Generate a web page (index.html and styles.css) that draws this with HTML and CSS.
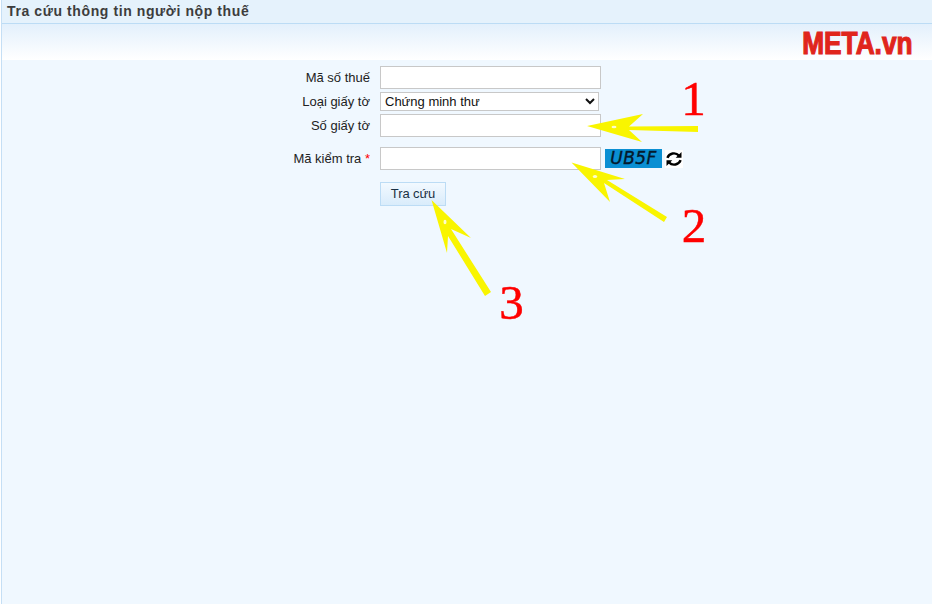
FILE: index.html
```html
<!DOCTYPE html>
<html lang="vi">
<head>
<meta charset="utf-8">
<title>Tra cứu thông tin người nộp thuế</title>
<link rel="stylesheet" href="styles.css">
</head>
<body>
<div class="page">
  <header class="title-bar"><h1 class="title">Tra cứu thông tin người nộp thuế</h1></header>
  <div class="band"><span class="logo">META.vn</span></div>
  <form class="form">
    <label class="label">Mã số thuế</label>
    <input class="field field-tall" type="text">
    <label class="label">Loại giấy tờ</label>
    <select class="select"><option>Chứng minh thư</option></select>
    <label class="label">Số giấy tờ</label>
    <input class="field field-tall" type="text">
    <label class="label label-gap">Mã kiểm tra <span class="req">*</span></label>
    <div class="captcha-row label-gap">
      <input class="field field-tall" type="text">
      <span class="captcha">UB5F</span>
      <span class="refresh">
        <svg width="18" height="18" viewBox="0 0 18 18" fill="none" stroke="#000" stroke-width="2.4">
          <path d="M2.400 7.800A6.800 6.400 0 0 1 14 5.600"/>
          <path d="M15.600 10.200A6.800 6.400 0 0 1 4 12.400"/>
          <path d="M16.500 2v5.800h-5.800z" fill="#000" stroke="none"/>
          <path d="M1.500 16v-5.800h5.800z" fill="#000" stroke="none"/>
        </svg>
      </span>
    </div>
    <span></span>
    <div class="actions"><button class="button" type="button">Tra cứu</button></div>
  </form>
  <svg class="notes" width="932" height="604" viewBox="0 0 932 604">
    <g fill="#f9f500">
      <path d="M587 126 643 114 629 126.500 698 126 698 132 629 130 642 142Z"/>
      <path d="M571.500 162.500 625 179 607 180 667 217 664 222 604 183 610 202Z"/>
      <path d="M431.500 200 471 238 451 229 491 292 485 296 448 236 447 253Z"/>
    </g>
    <g class="note-dot">
      <ellipse cx="614" cy="127" rx="2.500" ry="1.200"/>
      <ellipse cx="595" cy="176.500" rx="2.200" ry="1.500"/>
      <ellipse cx="445" cy="222" rx="1.500" ry="2.300"/>
    </g>
    <g class="note-num">
      <text x="693.500" y="115" text-anchor="middle">1</text>
      <text x="694" y="242" text-anchor="middle">2</text>
      <text x="511.500" y="319" text-anchor="middle">3</text>
    </g>
  </svg>
</div>
</body>
</html>
```
FILE: styles.css
```css
* { box-sizing: border-box; }
html, body { margin: 0; padding: 0; }
body { background: #fff; overflow: hidden; }
.page {
  position: relative;
  width: 932px;
  height: 604px;
  margin-left: 1px;
  border-left: 1px solid #c5dff5;
  background: #f0f8ff;
  font-family: "Liberation Sans", Arial, sans-serif;
  font-size: 13px;
  color: #222;
}
.title-bar {
  height: 24px;
  padding-left: 5px;
  background: #e5f2fc;
  border-bottom: 1px solid #bcdcf5;
}
.title {
  margin: 0;
  font-size: 14px;
  line-height: 23px;
  font-weight: bold;
  letter-spacing: 0.6px;
  color: #3d3d3d;
}
.band {
  height: 36px;
  display: flex;
  justify-content: flex-end;
  background: linear-gradient(#e3f0fc, #fff);
  padding-right: 20px;
}
.logo {
  font-size: 32px;
  line-height: 38px;
  font-weight: bold;
  color: #e0251c;
  -webkit-text-stroke: 1.2px #e0251c;
  transform: scaleX(0.82);
  transform-origin: right center;
}
.form {
  display: grid;
  grid-template-columns: 368px auto;
  column-gap: 10px;
  row-gap: 3px;
  align-items: center;
  justify-content: start;
  padding-top: 6px;
}
.label { text-align: right; }
.label-gap { margin-top: 7px; }
.req { color: #f00; }
.field {
  display: block;
  width: 221px;
  height: 23px;
  padding: 0 4px;
  background: #fff;
  border: 1px solid #c8c8c8;
}
.select {
  display: block;
  width: 219px;
  height: 19px;
  padding: 0;
  background: #fff;
  border: 1px solid #c8c8c8;
  border-radius: 0;
  font-family: inherit;
  font-size: 13px;
  color: #111;
}
.captcha-row { display: flex; align-items: center; }
.captcha {
  margin-left: 4px;
  width: 57px;
  height: 19px;
  background: #0a8fd3;
  color: #04192c;
  font-family: "DejaVu Sans", sans-serif;
  font-size: 17px;
  line-height: 19px;
  font-style: italic;
  letter-spacing: 0.4px;
  -webkit-text-stroke: 0.4px #04192c;
  text-align: center;
}
.refresh {
  margin-left: 3px;
  width: 18px;
  height: 18px;
  background: #fff;
  display: flex;
}
.actions { margin-top: 9px; }
.button {
  display: block;
  width: 66px;
  height: 24px;
  padding: 0 0 2px;
  border: 1px solid #bcdcf5;
  background: linear-gradient(#f2f9ff, #d9ecfb);
  font-family: inherit;
  font-size: 13px;
  letter-spacing: -0.1px;
  color: #1a3044;
}
.notes { position: absolute; left: -2px; top: 0; pointer-events: none; }
.note-dot { fill: #fff; opacity: 0.8; }
.note-num {
  font-family: "Liberation Serif", "Times New Roman", serif;
  font-size: 49px;
  fill: #f00;
  stroke: #f00;
  stroke-width: 0.5px;
}
```
